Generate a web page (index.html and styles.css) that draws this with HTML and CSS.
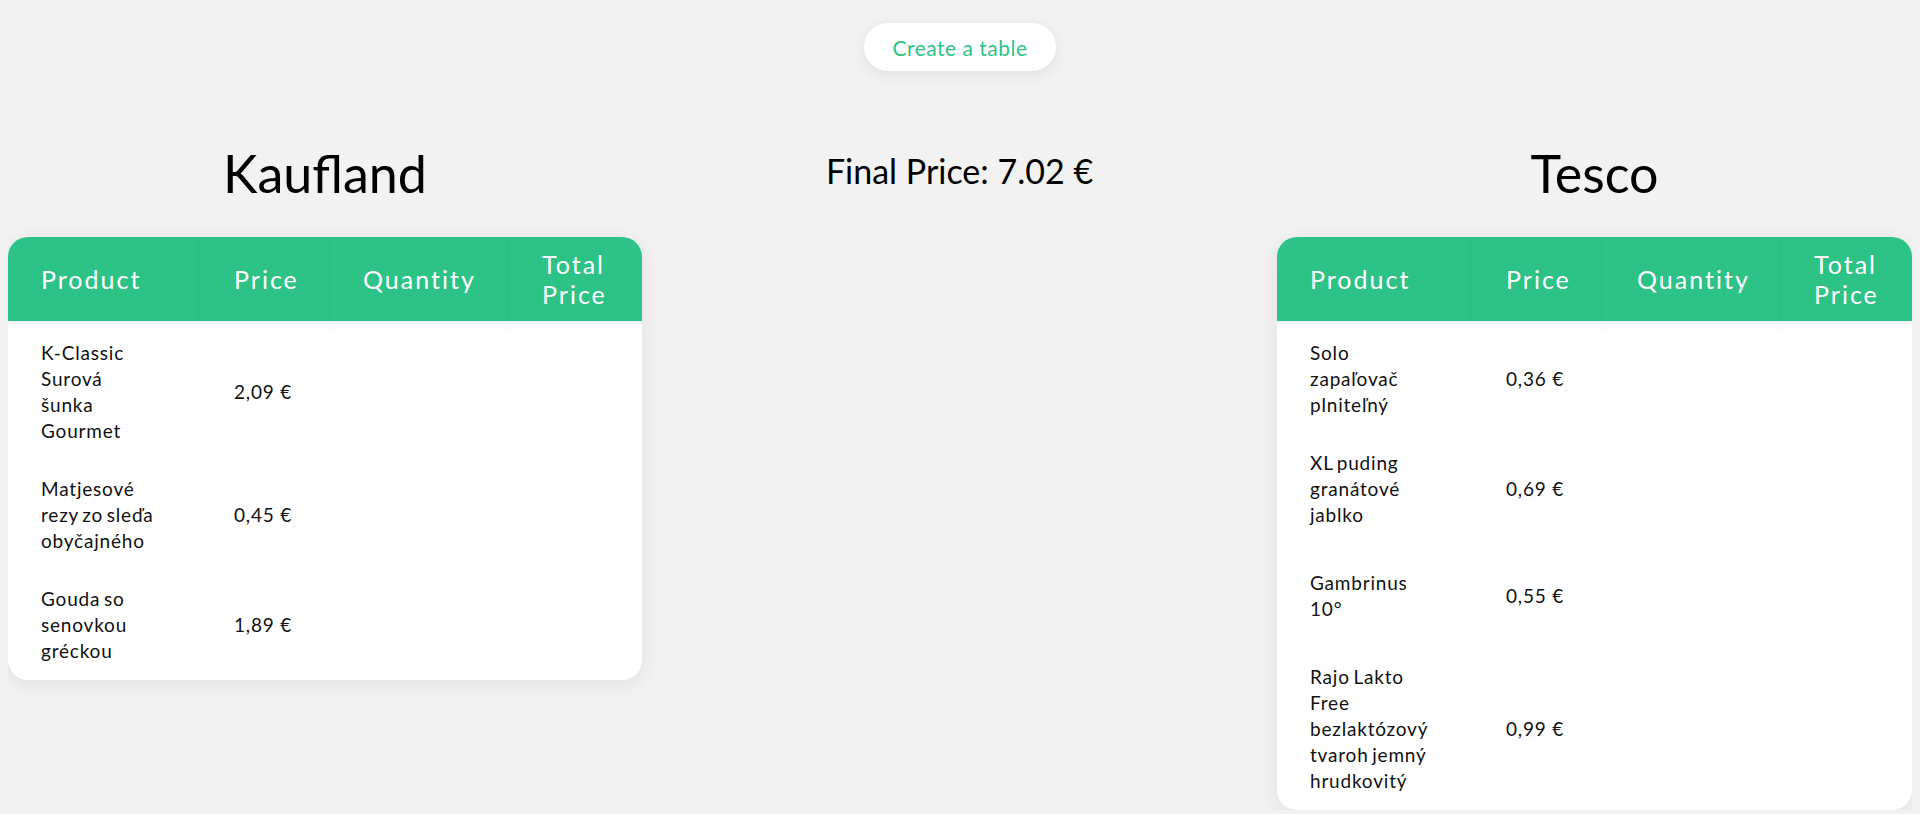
FILE: index.html
```html
<!DOCTYPE html>
<html lang="sk">
<head>
<meta charset="utf-8">
<title>Price comparison</title>
<link rel="stylesheet" href="styles.css">
</head>
<body>
  <div class="toolbar">
    <button class="create-btn" type="button">Create a table</button>
  </div>

  <main class="stores">
    <section class="store">
      <h1 class="store-name">Kaufland</h1>
      <div class="card">
        <table class="price-table price-table--kaufland">
          <colgroup>
            <col class="col-product"><col class="col-price"><col class="col-qty"><col class="col-total">
          </colgroup>
          <thead>
            <tr><th>Product</th><th>Price</th><th>Quantity</th><th>Total Price</th></tr>
          </thead>
          <tbody>
            <tr><td class="product">K-Classic Surová šunka Gourmet</td><td>2,09 €</td><td></td><td></td></tr>
            <tr><td class="product">Matjesové rezy zo sleďa obyčajného</td><td>0,45 €</td><td></td><td></td></tr>
            <tr><td class="product">Gouda so senovkou gréckou</td><td>1,89 €</td><td></td><td></td></tr>
          </tbody>
        </table>
      </div>
    </section>

    <section class="summary">
      <h2 class="final-price">Final Price: 7.02 €</h2>
    </section>

    <section class="store">
      <h1 class="store-name">Tesco</h1>
      <div class="card">
        <table class="price-table price-table--tesco">
          <colgroup>
            <col class="col-product"><col class="col-price"><col class="col-qty"><col class="col-total">
          </colgroup>
          <thead>
            <tr><th>Product</th><th>Price</th><th>Quantity</th><th>Total Price</th></tr>
          </thead>
          <tbody>
            <tr><td class="product">Solo zapaľovač plniteľný</td><td>0,36 €</td><td></td><td></td></tr>
            <tr class="row-loose"><td class="product">XL puding granátové jablko</td><td>0,69 €</td><td></td><td></td></tr>
            <tr class="row-loose"><td class="product">Gambrinus 10°</td><td>0,55 €</td><td></td><td></td></tr>
            <tr><td class="product">Rajo Lakto Free bezlaktózový tvaroh jemný hrudkovitý</td><td>0,99 €</td><td></td><td></td></tr>
          </tbody>
        </table>
      </div>
    </section>
  </main>
</body>
</html>
```

FILE: styles.css
```css
* {
  box-sizing: border-box;
}

body {
  margin: 8px;
  background: #f2f2f2;
  font-family: "Lato", "Noto Sans", sans-serif;
  color: #111;
}

.toolbar {
  display: flex;
  justify-content: center;
  padding-top: 15px;
}

.create-btn {
  width: 192px;
  height: 48px;
  border: none;
  border-radius: 24px;
  background: #fff;
  color: #2ec386;
  font-family: "Lato", "Noto Sans", sans-serif;
  font-size: 21px;
  letter-spacing: 0.5px;
  box-shadow: 0 4px 14px rgba(0, 0, 0, 0.07);
  cursor: pointer;
}

.stores {
  display: flex;
  justify-content: space-between;
  align-items: flex-start;
}

.store {
  width: 634px;
}

.store:last-child {
  width: 635px;
}

.store-name {
  margin: 72px 0 34px;
  font-size: 52px;
  line-height: 60px;
  font-weight: 400;
  text-align: center;
  color: #000;
}

.summary {
  text-align: center;
}

.final-price {
  margin: 80px 0 0;
  font-size: 34px;
  line-height: 40px;
  font-weight: 400;
  color: #000;
}

.card {
  background: #fff;
  border-radius: 20px;
  overflow: hidden;
  box-shadow: 0 4px 20px rgba(0, 0, 0, 0.08);
}

.price-table {
  width: 100%;
  border-collapse: collapse;
  table-layout: fixed;
}

.price-table--kaufland .col-product { width: 193px; }
.price-table--kaufland .col-price { width: 129px; }
.price-table--kaufland .col-qty { width: 179px; }
.price-table--kaufland .col-total { width: 133px; }

.price-table--tesco .col-product { width: 196px; }
.price-table--tesco .col-price { width: 131px; }
.price-table--tesco .col-qty { width: 177px; }
.price-table--tesco .col-total { width: 131px; }

.price-table th {
  background: #2ec386;
  color: #fff;
  font-weight: 400;
  font-size: 25px;
  line-height: 30px;
  letter-spacing: 2px;
  text-align: left;
  padding: 12px 10px 12px 33px;
  box-shadow: inset -10px 0 10px -10px rgba(0, 0, 0, 0.05);
}

.price-table th:last-child {
  box-shadow: none;
}

.price-table td {
  font-size: 19px;
  line-height: 26px;
  letter-spacing: 0.8px;
  padding: 16px 10px 16px 33px;
  vertical-align: middle;
  text-align: left;
}

.price-table td.product {
  word-spacing: -2px;
}

.price-table--kaufland td.product {
  padding-right: 46px;
}

.price-table--tesco td.product {
  padding-right: 39px;
}

.price-table tbody tr:first-child td {
  padding-top: 19px;
  box-shadow: inset 0 12px 12px -10px rgba(0, 0, 0, 0.06);
}

.price-table .row-loose td {
  padding-bottom: 26px;
}
```
